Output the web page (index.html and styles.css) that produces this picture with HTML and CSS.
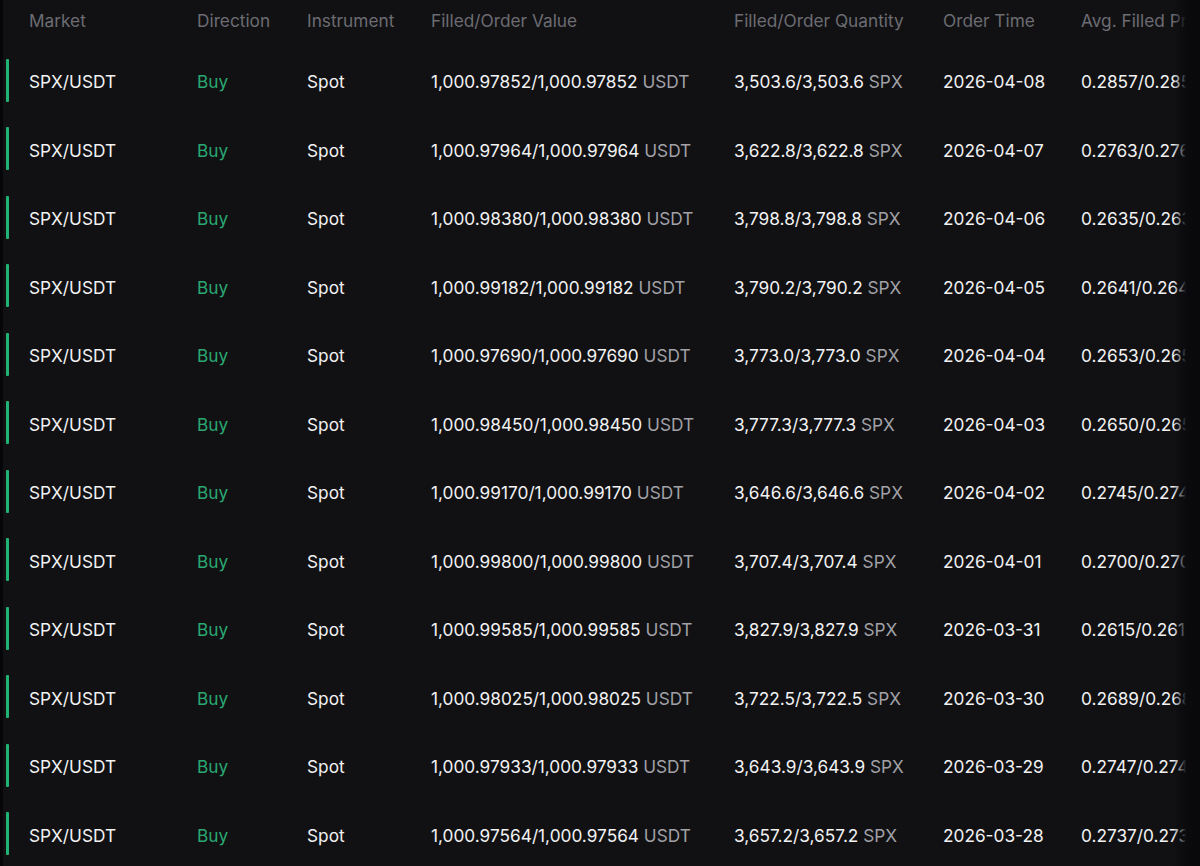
FILE: index.html
```html
<!DOCTYPE html>
<html lang="en">
<head>
<meta charset="utf-8">
<title>Order History</title>
<link rel="stylesheet" href="styles.css">
</head>
<body>
<div class="page">
  <div class="table">
    <div class="row head">
      <div class="c c1">Market</div>
      <div class="c c2">Direction</div>
      <div class="c c3">Instrument</div>
      <div class="c c4">Filled/Order Value</div>
      <div class="c c5">Filled/Order Quantity</div>
      <div class="c c6">Order Time</div>
      <div class="c c7">Avg. Filled Price</div>
    </div>
    <div class="row"><div class="c c1">SPX/USDT</div><div class="c c2 buy">Buy</div><div class="c c3">Spot</div><div class="c c4">1,000.97852/1,000.97852 <span class="u">USDT</span></div><div class="c c5">3,503.6/3,503.6 <span class="u">SPX</span></div><div class="c c6">2026-04-08</div><div class="c c7">0.2857/0.2857 <span class="u">USDT</span></div></div>
    <div class="row"><div class="c c1">SPX/USDT</div><div class="c c2 buy">Buy</div><div class="c c3">Spot</div><div class="c c4">1,000.97964/1,000.97964 <span class="u">USDT</span></div><div class="c c5">3,622.8/3,622.8 <span class="u">SPX</span></div><div class="c c6">2026-04-07</div><div class="c c7">0.2763/0.2763 <span class="u">USDT</span></div></div>
    <div class="row"><div class="c c1">SPX/USDT</div><div class="c c2 buy">Buy</div><div class="c c3">Spot</div><div class="c c4">1,000.98380/1,000.98380 <span class="u">USDT</span></div><div class="c c5">3,798.8/3,798.8 <span class="u">SPX</span></div><div class="c c6">2026-04-06</div><div class="c c7">0.2635/0.2635 <span class="u">USDT</span></div></div>
    <div class="row"><div class="c c1">SPX/USDT</div><div class="c c2 buy">Buy</div><div class="c c3">Spot</div><div class="c c4">1,000.99182/1,000.99182 <span class="u">USDT</span></div><div class="c c5">3,790.2/3,790.2 <span class="u">SPX</span></div><div class="c c6">2026-04-05</div><div class="c c7">0.2641/0.2641 <span class="u">USDT</span></div></div>
    <div class="row"><div class="c c1">SPX/USDT</div><div class="c c2 buy">Buy</div><div class="c c3">Spot</div><div class="c c4">1,000.97690/1,000.97690 <span class="u">USDT</span></div><div class="c c5">3,773.0/3,773.0 <span class="u">SPX</span></div><div class="c c6">2026-04-04</div><div class="c c7">0.2653/0.2653 <span class="u">USDT</span></div></div>
    <div class="row"><div class="c c1">SPX/USDT</div><div class="c c2 buy">Buy</div><div class="c c3">Spot</div><div class="c c4">1,000.98450/1,000.98450 <span class="u">USDT</span></div><div class="c c5">3,777.3/3,777.3 <span class="u">SPX</span></div><div class="c c6">2026-04-03</div><div class="c c7">0.2650/0.2650 <span class="u">USDT</span></div></div>
    <div class="row"><div class="c c1">SPX/USDT</div><div class="c c2 buy">Buy</div><div class="c c3">Spot</div><div class="c c4">1,000.99170/1,000.99170 <span class="u">USDT</span></div><div class="c c5">3,646.6/3,646.6 <span class="u">SPX</span></div><div class="c c6">2026-04-02</div><div class="c c7">0.2745/0.2745 <span class="u">USDT</span></div></div>
    <div class="row"><div class="c c1">SPX/USDT</div><div class="c c2 buy">Buy</div><div class="c c3">Spot</div><div class="c c4">1,000.99800/1,000.99800 <span class="u">USDT</span></div><div class="c c5">3,707.4/3,707.4 <span class="u">SPX</span></div><div class="c c6">2026-04-01</div><div class="c c7">0.2700/0.2700 <span class="u">USDT</span></div></div>
    <div class="row"><div class="c c1">SPX/USDT</div><div class="c c2 buy">Buy</div><div class="c c3">Spot</div><div class="c c4">1,000.99585/1,000.99585 <span class="u">USDT</span></div><div class="c c5">3,827.9/3,827.9 <span class="u">SPX</span></div><div class="c c6">2026-03-31</div><div class="c c7">0.2615/0.2615 <span class="u">USDT</span></div></div>
    <div class="row"><div class="c c1">SPX/USDT</div><div class="c c2 buy">Buy</div><div class="c c3">Spot</div><div class="c c4">1,000.98025/1,000.98025 <span class="u">USDT</span></div><div class="c c5">3,722.5/3,722.5 <span class="u">SPX</span></div><div class="c c6">2026-03-30</div><div class="c c7">0.2689/0.2689 <span class="u">USDT</span></div></div>
    <div class="row"><div class="c c1">SPX/USDT</div><div class="c c2 buy">Buy</div><div class="c c3">Spot</div><div class="c c4">1,000.97933/1,000.97933 <span class="u">USDT</span></div><div class="c c5">3,643.9/3,643.9 <span class="u">SPX</span></div><div class="c c6">2026-03-29</div><div class="c c7">0.2747/0.2747 <span class="u">USDT</span></div></div>
    <div class="row"><div class="c c1">SPX/USDT</div><div class="c c2 buy">Buy</div><div class="c c3">Spot</div><div class="c c4">1,000.97564/1,000.97564 <span class="u">USDT</span></div><div class="c c5">3,657.2/3,657.2 <span class="u">SPX</span></div><div class="c c6">2026-03-28</div><div class="c c7">0.2737/0.2737 <span class="u">USDT</span></div></div>
  </div>
  <div class="fade"></div>
</div>
</body>
</html>
```
FILE: styles.css
```css
html, body {
  margin: 0;
  padding: 0;
  background: #060608;
  overflow: hidden;
}
body {
  font-family: Inter, "Noto Sans", sans-serif;
  -webkit-font-smoothing: antialiased;
}
.page {
  position: relative;
  width: 1200px;
  height: 866px;
  margin-left: 3px;
  background: #111114;
  overflow: hidden;
}
.table {
  display: flex;
  flex-direction: column;
}
.row {
  position: relative;
  display: grid;
  grid-template-columns: 168px 110px 124px 303px 209px 138px 300px;
  padding-left: 26px;
  height: 68.5px;
  flex-shrink: 0;
  align-items: center;
  white-space: nowrap;
  font-size: 17.25px;
  color: #f2f2f3;
}
.row::before {
  content: "";
  position: absolute;
  left: 3px;
  top: 11px;
  width: 2.5px;
  height: 43px;
  background: #20b374;
  border-radius: 1px;
}
.row.head {
  height: 47.5px;
  padding-top: 0;
  padding-bottom: 6px;
  box-sizing: border-box;
  color: #6c6c72;
}
.row.head::before {
  display: none;
}
.buy {
  color: #2aa872;
}
.u {
  color: #a1a1a7;
}
.fade {
  position: absolute;
  top: 0;
  right: 0;
  width: 30px;
  height: 100%;
  background: linear-gradient(to right, rgba(10,10,12,0) 0, rgba(10,10,12,0.7) 10px, #0a0a0c 13px, #09090b 100%);
}
```
